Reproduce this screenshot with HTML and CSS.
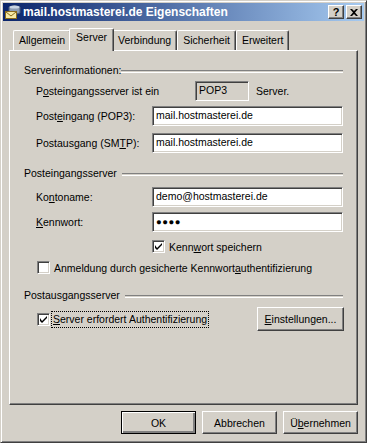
FILE: index.html
```html
<!DOCTYPE html>
<html lang="de">
<head>
  <meta charset="UTF-8" />
  <title>mail.hostmasterei.de Eigenschaften</title>
  <link rel="stylesheet" href="styles.css">
</head>
<body>

<div class="window">
  <div class="titlebar">
    <svg class="app-icon" width="16" height="16" viewBox="0 0 16 16">
      <path d="M4 3 Q9 0 15 3 L15 9 Q9 12 4 9 Z" fill="#8c9cb4" stroke="#4a5a78" stroke-width="1"/>
      <ellipse cx="9.5" cy="3" rx="5" ry="1.6" fill="#c8d4e4"/>
      <rect x="0.5" y="7.5" width="11" height="7" fill="#f6eaa6" stroke="#8a6a1a"/>
      <path d="M1 8 L6 12 L11 8" fill="none" stroke="#8a6a1a"/>
    </svg>
    <span class="title">mail.hostmasterei.de Eigenschaften</span>
    <div class="title-buttons">
      <span class="tbtn">?</span>
      <span class="tbtn">
        <svg width="8" height="7" viewBox="0 0 8 7"><path d="M0 0h2l2 2 2-2h2L5 3.5 8 7H6L4 5 2 7H0l3-3.5z" fill="#000"/></svg>
      </span>
    </div>
  </div>

  <div class="tabs">
    <div class="tab">Allgemein</div>
    <div class="tab active">Server</div>
    <div class="tab">Verbindung</div>
    <div class="tab">Sicherheit</div>
    <div class="tab">Erweitert</div>
  </div>

  <div class="panel">
    <div class="group-head first"><span>Serverinformationen:</span><i></i></div>

    <div class="field type-row">
      <label>P<u>o</u>steingangsserver ist ein</label>
      <div class="textbox readonly">POP3</div>
      <span class="after">Server.</span>
    </div>
    <div class="field row-in">
      <label>Post<u>e</u>ingang (POP3):</label>
      <div class="textbox">mail.hostmasterei.de</div>
    </div>
    <div class="field row-out">
      <label>Postausgang (SM<u>T</u>P):</label>
      <div class="textbox">mail.hostmasterei.de</div>
    </div>

    <div class="group-head second"><span>Posteingangsserver</span><i></i></div>

    <div class="field row-account">
      <label>Ko<u>n</u>toname:</label>
      <div class="textbox">demo@hostmasterei.de</div>
    </div>
    <div class="field row-pass">
      <label><u>K</u>ennwort:</label>
      <div class="textbox dots">●●●●</div>
    </div>

    <div class="check-row save-pass">
      <span class="check on"><svg width="7" height="7" viewBox="0 0 7 7"><path d="M0 2v3l2 2 5-5V-0L2 5z" fill="#000"/></svg></span>
      <span>Kenn<u>w</u>ort speichern</span>
    </div>
    <div class="check-row spa">
      <span class="check"></span>
      <span>Anmeldung durch gesicherte Kennwort<u>a</u>uthentifizierung</span>
    </div>

    <div class="group-head third"><span>Postausgangsserver</span><i></i></div>

    <div class="out-row">
      <div class="check-row">
        <span class="check on"><svg width="7" height="7" viewBox="0 0 7 7"><path d="M0 2v3l2 2 5-5V-0L2 5z" fill="#000"/></svg></span>
        <span class="focus"><u>S</u>erver erfordert Authentifizierung</span>
      </div>
      <button class="btn wide"><u>E</u>instellungen...</button>
    </div>
  </div>

  <div class="dialog-buttons">
    <button class="btn default">OK</button>
    <button class="btn">Abbrechen</button>
    <button class="btn">Ü<u>b</u>ernehmen</button>
  </div>
</div>

</body>
</html>
```

FILE: styles.css
```css
body {
  margin: 0;
  background: #d4d0c8;
  font-family: "Liberation Sans", Arial, sans-serif;
  font-size: 10.5px;
  color: #000;
}
.window {
  width: 367px;
  height: 443px;
  box-sizing: border-box;
  padding: 3px;
  background: #d4d0c8;
  border: 1px solid;
  border-color: #d4d0c8 #404040 #404040 #d4d0c8;
  box-shadow: inset 1px 1px #fff, inset -1px -1px #808080;
}
.titlebar {
  height: 18px;
  margin: -1px -1px 0 -1px;
  display: flex;
  align-items: center;
  padding: 0 2px 0 2px;
  background: linear-gradient(to right, #0a246a, #a6caf0);
  color: #fff;
}
.app-icon {
  flex: none;
  margin-right: 2px;
}
.title {
  font-weight: bold;
  font-size: 12px;
  flex: 1;
  white-space: nowrap;
}
.title-buttons {
  display: flex;
  gap: 2px;
}
.tbtn {
  width: 16px;
  height: 14px;
  box-sizing: border-box;
  background: #d4d0c8;
  color: #000;
  font-weight: bold;
  font-size: 11px;
  display: flex;
  align-items: center;
  justify-content: center;
  border: 1px solid;
  border-color: #fff #404040 #404040 #fff;
  box-shadow: inset -1px -1px #808080;
}
.tabs {
  display: flex;
  align-items: flex-end;
  height: 23px;
  margin: 6px 0 0 6px;
  padding-left: 3px;
}
.tab {
  height: 19px;
  padding: 0 5px;
  line-height: 18px;
  border: 1px solid;
  border-bottom: none;
  border-color: #fff #404040 #404040 #fff;
  box-shadow: inset -1px 0 #808080;
  border-radius: 2px 2px 0 0;
  white-space: nowrap;
}
.tab.active {
  position: relative;
  z-index: 1;
  height: 22px;
  margin: 0 -2px -1px -2px;
  padding: 0 6px;
  line-height: 17px;
  background: #d4d0c8;
}
.panel {
  width: 349px;
  height: 355px;
  box-sizing: border-box;
  margin-left: 5px;
  padding: 13px 14px 0 14px;
  border: 1px solid;
  border-color: #fff #404040 #404040 #fff;
  box-shadow: inset -1px -1px #808080;
  display: flex;
  flex-direction: column;
}
.group-head {
  display: flex;
  align-items: center;
  height: 13px;
  line-height: 13px;
  gap: 5px;
}
.group-head.first { gap: 0; }
.group-head i {
  flex: 1;
  height: 1px;
  border-top: 1px solid #808080;
  border-bottom: 1px solid #fff;
  margin-top: 1px;
}
.group-head.second { margin-top: 14px; }
.group-head.third { margin-top: 15px; }

.field {
  display: flex;
  align-items: center;
  height: 20px;
  padding-left: 12px;
}
.field label {
  width: 116px;
  flex: none;
}
.type-row { margin-top: 4px; }
.type-row label { width: 159px; }
.row-in { margin-top: 5px; }
.row-out { margin-top: 7px; }
.row-account { margin-top: 7px; }
.row-pass { margin-top: 5px; }

.textbox {
  flex: 1;
  height: 20px;
  box-sizing: border-box;
  background: #fff;
  padding: 0 3px;
  line-height: 17px;
  white-space: nowrap;
  border: 1px solid;
  border-color: #808080 #fff #fff #808080;
  box-shadow: inset 1px 1px #404040, inset -1px -1px #d4d0c8;
}
.textbox.readonly {
  flex: none;
  width: 54px;
  background: #d4d0c8;
}
.textbox.dots {
  font-size: 9.5px;
  letter-spacing: 0.5px;
  line-height: 17px;
}
.after {
  margin-left: 7px;
}

.check-row {
  display: flex;
  align-items: center;
  gap: 4px;
  height: 13px;
}
.save-pass {
  margin-top: 8px;
  padding-left: 128px;
}
.spa {
  margin-top: 8px;
  padding-left: 13px;
}
.check {
  width: 13px;
  height: 13px;
  box-sizing: border-box;
  flex: none;
  background: #fff;
  border: 1px solid;
  border-color: #808080 #fff #fff #808080;
  box-shadow: inset 1px 1px #404040, inset -1px -1px #d4d0c8;
  display: flex;
  align-items: center;
  justify-content: center;
}
.out-row {
  display: flex;
  align-items: center;
  justify-content: space-between;
  margin-top: 5px;
  padding-left: 13px;
  margin-right: -1px;
}
.focus {
  outline: 1px dotted #000;
  padding: 1px 1px 2px 1px;
  margin-left: -2px;
}

.btn {
  width: 75px;
  height: 23px;
  box-sizing: border-box;
  padding: 0;
  font-family: inherit;
  font-size: 10.5px;
  color: #000;
  background: #d4d0c8;
  border: 1px solid;
  border-color: #fff #404040 #404040 #fff;
  box-shadow: inset -1px -1px #808080;
  border-radius: 0;
}
.btn.wide {
  width: 87px;
  height: 24px;
}
.btn.default {
  border: 1px solid #000;
  box-shadow: inset 1px 1px #fff, inset -2px -2px #808080, inset -1px -1px #404040;
}
.dialog-buttons {
  display: flex;
  justify-content: flex-end;
  gap: 6px;
  margin-top: 6px;
  padding-right: 5px;
}
```
